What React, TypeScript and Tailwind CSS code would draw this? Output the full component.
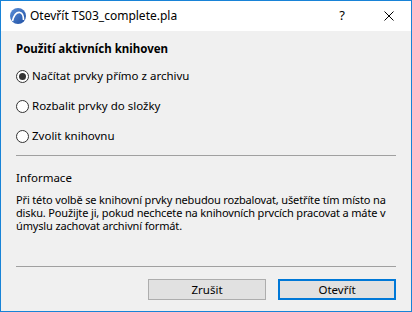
import React, {useState} from 'react';

const font = {fontFamily: '"Noto Sans", "Open Sans", Arial, sans-serif'};

const AppLogo: React.FC = () => (
  <svg width="16" height="16" viewBox="0 0 16 16">
    <defs>
      <linearGradient id="lg" x1="0" y1="0" x2="1" y2="1">
        <stop offset="0" stopColor="#5b8fd8"/>
        <stop offset="1" stopColor="#1f4fa3"/>
      </linearGradient>
    </defs>
    <circle cx="8" cy="8" r="8" fill="url(#lg)"/>
    <path d="M2.5 13 C4 7 7 4 10 4.5 C12.5 5 13.5 8 13.5 12" fill="none" stroke="#fff" strokeWidth="1.6"/>
  </svg>
);

const Radio: React.FC<{label: string; checked: boolean; onSelect: () => void}> = ({label, checked, onSelect}) => (
  <button type="button" onClick={onSelect} className="flex items-center h-[30px] text-left">
    <span className="w-[13px] h-[13px] rounded-full border border-[#333] bg-white flex items-center justify-center">
      {checked && <span className="w-[7px] h-[7px] rounded-full bg-[#333]"/>}
    </span>
    <span className="ml-[3px] text-[11.5px] text-black leading-[16px]">{label}</span>
  </button>
);

const options = [
  'Načítat prvky přímo z archivu',
  'Rozbalit prvky do složky',
  'Zvolit knihovnu',
];

export default function App() {
  const [selected, setSelected] = useState(0);

  return (
    <div style={font} className="w-[412px] h-[312px] border border-[#1883d7] flex flex-col bg-[#f0f0f0] overflow-hidden">
      <div className="h-[30px] bg-white flex items-center shrink-0">
        <div className="ml-[9px]"><AppLogo/></div>
        <span className="ml-[4px] text-[12px] text-black">Otevřít TS03_complete.pla</span>
        <span className="ml-auto text-[13px] text-black w-[10px] text-center">?</span>
        <svg className="ml-[37px] mr-[17px]" width="10" height="10" viewBox="0 0 10 10">
          <path d="M0.5 0.5 L9.5 9.5 M9.5 0.5 L0.5 9.5" stroke="#000" strokeWidth="1"/>
        </svg>
      </div>

      <div className="flex flex-col px-[15px] flex-grow text-[11px]">
        <div className="mt-[10px] text-[11.5px] leading-[16px] font-bold text-black">Použití aktivních knihoven</div>
        <div className="mt-[4px] flex flex-col">
          {options.map((o, i) => (
            <Radio key={o} label={o} checked={selected === i} onSelect={() => setSelected(i)}/>
          ))}
        </div>
        <div className="mt-[4px] h-px bg-[#a0a0a0]"/>
        <div className="mt-[14px] text-[11.5px] leading-[16px] text-black">Informace</div>
        <p className="mt-[7px] text-[11px] leading-[13px] tracking-[-0.15px] text-black">
          Při této volbě se knihovní prvky nebudou rozbalovat, ušetříte tím místo na disku. Použijte ji, pokud nechcete na knihovních prvcích pracovat a máte v úmyslu zachovat archivní formát.
        </p>
        <div className="mt-auto h-px bg-[#a0a0a0]"/>
        <div className="flex justify-end gap-[12px] mt-[12px] mb-[11px]">
          <button type="button" className="w-[118px] h-[21px] bg-[#e1e1e1] border border-[#adadad] text-[11.5px] text-black">Zrušit</button>
          <button type="button" className="w-[118px] h-[21px] bg-[#e1e1e1] border-2 border-[#0078d7] text-[11.5px] text-black">Otevřít</button>
        </div>
      </div>
    </div>
  );
}
